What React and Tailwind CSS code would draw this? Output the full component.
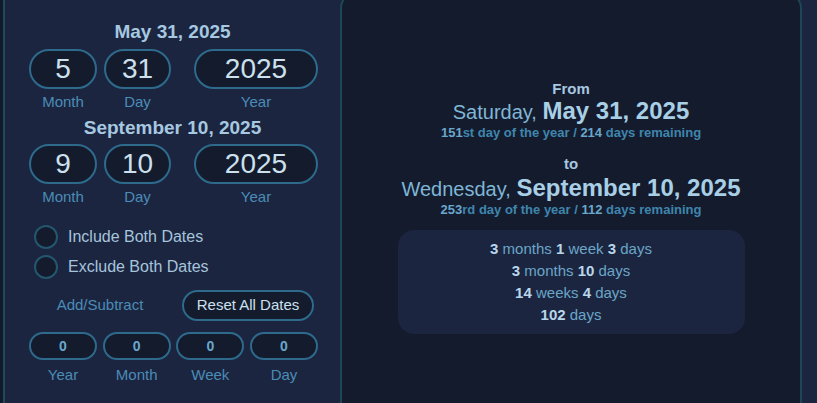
import React, { useState } from 'react'

const font = { fontFamily: '"Liberation Sans", Arial, sans-serif' }

const Pill = ({ value, w, h = 'h-[40px]', text = 'text-[28px] text-[#cde0ee]' }) => (
  <div className={`${w} ${h} ${text} flex items-center justify-center rounded-full border-2 border-[#2d6a8c] bg-[#141b2d]`}>
    {value}
  </div>
)

const DateRow = ({ month, day, year }) => (
  <div className="flex pl-[24px]">
    <div className="flex flex-col items-center">
      <Pill value={month} w="w-[68px]" />
      <span className="mt-[4px] text-[15px] leading-[18px] text-[#4b8cb6]">Month</span>
    </div>
    <div className="ml-[7px] flex flex-col items-center">
      <Pill value={day} w="w-[67px]" />
      <span className="mt-[4px] text-[15px] leading-[18px] text-[#4b8cb6]">Day</span>
    </div>
    <div className="ml-[23px] flex flex-col items-center">
      <Pill value={year} w="w-[124px]" />
      <span className="mt-[4px] text-[15px] leading-[18px] text-[#4b8cb6]">Year</span>
    </div>
  </div>
)

const Radio = ({ label, checked, onClick }) => (
  <button onClick={onClick} className="flex items-center gap-[10px] text-left">
    <span className="flex h-[24px] w-[24px] items-center justify-center rounded-full border-2 border-[#24566e] bg-[#141b2d]">
      {checked && <span className="h-[10px] w-[10px] rounded-full bg-[#6aa7cc]" />}
    </span>
    <span className="text-[16px] leading-[20px] text-[#a6c4dc]">{label}</span>
  </button>
)

const Summary = ({ parts }) => (
  <div className="text-[15px] leading-[22px] text-[#6ba5c8]">
    {parts.map((p, i) => (
      <span key={i}>
        {i > 0 && ' '}
        <b className="text-[#b9d5ea]">{p[0]}</b> {p[1]}
      </span>
    ))}
  </div>
)

const App = () => {
  const [mode, setMode] = useState(null)

  return (
    <div style={font} className="h-[403px] w-[817px] overflow-hidden bg-[#121a2a]">
      <div className="ml-[3px] flex h-[403px] border-l-2 border-[#1f4a5c] bg-[#1b2540]">
        {/* left column: inputs */}
        <div className="flex w-[335px] flex-col pt-[21px]">
          <h3 className="text-center text-[19px] font-bold leading-[22px] text-[#a6c8e0]">May 31, 2025</h3>
          <div className="mt-[6px]">
            <DateRow month="5" day="31" year="2025" />
          </div>
          <h3 className="mt-[6px] text-center text-[19px] font-bold leading-[22px] text-[#a6c8e0]">September 10, 2025</h3>
          <div className="mt-[5px]">
            <DateRow month="9" day="10" year="2025" />
          </div>

          <div className="mt-[19px] flex flex-col gap-[6px] pl-[29px]">
            <Radio label="Include Both Dates" checked={mode === 'inc'} onClick={() => setMode('inc')} />
            <Radio label="Exclude Both Dates" checked={mode === 'exc'} onClick={() => setMode('exc')} />
          </div>

          <div className="mt-[11px] flex items-center pl-[24px]">
            <span className="w-[142px] text-center text-[15px] text-[#4b8cb6]">Add/Subtract</span>
            <button className="ml-[11px] h-[31px] w-[132px] rounded-full border-2 border-[#2d6a8c] bg-[#141b2d] text-[15px] text-[#cde0ee]">
              Reset All Dates
            </button>
          </div>

          <div className="mt-[11px] flex gap-[5.67px] pl-[24px]">
            {['Year', 'Month', 'Week', 'Day'].map((l) => (
              <div key={l} className="flex flex-col items-center">
                <Pill value="0" w="w-[68px]" h="h-[28px]" text="text-[14px] font-bold text-[#6aa7cc]" />
                <span className="mt-[6px] text-[15px] leading-[18px] text-[#4b8cb6]">{l}</span>
              </div>
            ))}
          </div>
        </div>

        {/* right column: result */}
        <div className="-mt-[8px] flex h-[430px] w-[462px] flex-col items-center rounded-[16px] border-2 border-[#1d4656] bg-[#141b2d] pt-[86px]">
          <div className="text-[15px] font-bold leading-[18px] text-[#a6c8e0]">From</div>
          <div className="text-[24px] leading-[26px] text-[#7fb6d6]">
            <span className="text-[20px]">Saturday, </span>
            <span className="font-bold text-[#a8cfe6]">May 31, 2025</span>
          </div>
          <div className="text-[13px] font-bold leading-[16px] text-[#3f86ad]">
            <span className="text-[#6aa7cc]">151</span>st day of the year / <span className="text-[#6aa7cc]">214</span> days remaining
          </div>

          <div className="mt-[14px] text-[15px] font-bold leading-[18px] text-[#a6c8e0]">to</div>
          <div className="mt-[2px] text-[24px] leading-[26px] text-[#7fb6d6]">
            <span className="text-[20px]">Wednesday, </span>
            <span className="font-bold text-[#a8cfe6]">September 10, 2025</span>
          </div>
          <div className="text-[13px] font-bold leading-[16px] text-[#3f86ad]">
            <span className="text-[#6aa7cc]">253</span>rd day of the year / <span className="text-[#6aa7cc]">112</span> days remaining
          </div>

          <div className="mt-[12px] flex w-[347px] flex-col items-center rounded-[16px] bg-[#1b2540] py-[8px]">
            <Summary parts={[['3', 'months'], ['1', 'week'], ['3', 'days']]} />
            <Summary parts={[['3', 'months'], ['10', 'days']]} />
            <Summary parts={[['14', 'weeks'], ['4', 'days']]} />
            <Summary parts={[['102', 'days']]} />
          </div>
        </div>
      </div>
    </div>
  )
}

export default App
